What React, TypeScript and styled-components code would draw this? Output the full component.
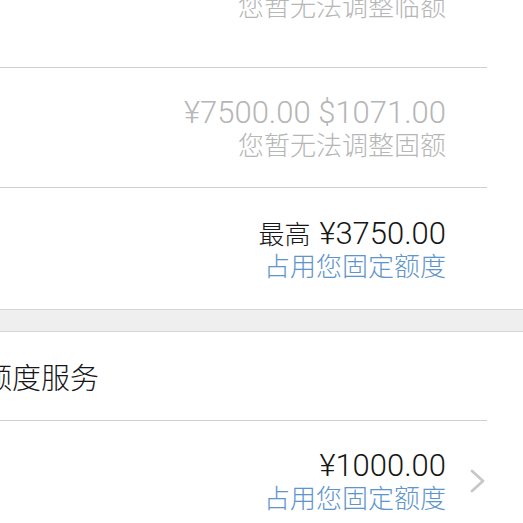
import React from "react";
import styled, { createGlobalStyle } from "styled-components";

const GlobalStyle = createGlobalStyle`
  html, body {
    margin: 0;
    padding: 0;
    background: #fff;
    overflow: hidden;
  }
  body {
    font-family: "Noto Sans CJK SC", "Noto Sans", sans-serif;
  }
`;

const Page = styled.div`
  margin-top: -52px;
  width: 523px;
`;

const Row = styled.div<{ $height: number; $noLine?: boolean; $bottom?: boolean }>`
  box-sizing: border-box;
  height: ${({ $height }) => $height}px;
  margin-right: 36px;
  padding-right: 2px;
  display: flex;
  align-items: ${({ $bottom }) => ($bottom ? "flex-end" : "center")};
  justify-content: flex-end;
  border-bottom: ${({ $noLine }) => ($noLine ? "none" : "1px solid #cfcfcf")};
  padding-bottom: ${({ $bottom }) => ($bottom ? "47px" : "0")};
`;

const Value = styled.div`
  display: flex;
  flex-direction: column;
  align-items: flex-end;
`;

const Line = styled.div<{ $tone: "grey" | "dark" | "blue" }>`
  font-size: 26px;
  font-weight: 300;
  line-height: 31px;
  white-space: nowrap;
  color: ${({ $tone }) =>
    $tone === "grey" ? "#b6b6b6" : $tone === "blue" ? "#6095cc" : "#161616"};
`;

const Amount = styled.span<{ $lead?: boolean }>`
  margin-left: ${({ $lead }) => ($lead ? "9px" : "0")};
  font-family: Roboto, "Liberation Sans", sans-serif;
  font-size: 31px;
  font-weight: 300;
  line-height: 31px;
`;

const Accessory = styled.div`
  width: 39px;
  display: flex;
  justify-content: flex-end;
  align-items: center;
`;

const Band = styled.div`
  height: 21px;
  background: #efefef;
  border-top: 1px solid #d6d6d6;
  border-bottom: 1px solid #d6d6d6;
`;

const Header = styled.div`
  box-sizing: border-box;
  height: 89px;
  margin-right: 36px;
  display: flex;
  align-items: center;
  border-bottom: 1px solid #cfcfcf;
`;

const HeaderText = styled.span`
  margin-left: -17px;
  font-size: 29px;
  font-weight: 300;
  color: #161616;
  white-space: nowrap;
`;

const Chevron = () => (
  <svg width="15" height="24" viewBox="0 0 15 24">
    <polyline
      points="2,2 13,12 2,22"
      fill="none"
      stroke="#c7c7cc"
      strokeWidth="2.8"
      strokeLinecap="round"
      strokeLinejoin="round"
    />
  </svg>
);

export default function App() {
  return (
    <>
      <GlobalStyle />
      <Page>
        <Row $height={120} $bottom>
          <Value>
            <Line $tone="grey">您暂无法调整临额</Line>
          </Value>
          <Accessory />
        </Row>
        <Row $height={120}>
          <Value>
            <Line $tone="grey">
              <Amount>¥7500.00 $1071.00</Amount>
            </Line>
            <Line $tone="grey">您暂无法调整固额</Line>
          </Value>
          <Accessory />
        </Row>
        <Row $height={121} $noLine>
          <Value>
            <Line $tone="dark">
              最高<Amount $lead>¥3750.00</Amount>
            </Line>
            <Line $tone="blue">占用您固定额度</Line>
          </Value>
          <Accessory />
        </Row>
        <Band />
        <Header>
          <HeaderText>额度服务</HeaderText>
        </Header>
        <Row $height={120}>
          <Value>
            <Line $tone="dark">
              <Amount>¥1000.00</Amount>
            </Line>
            <Line $tone="blue">占用您固定额度</Line>
          </Value>
          <Accessory>
            <Chevron />
          </Accessory>
        </Row>
      </Page>
    </>
  );
}
